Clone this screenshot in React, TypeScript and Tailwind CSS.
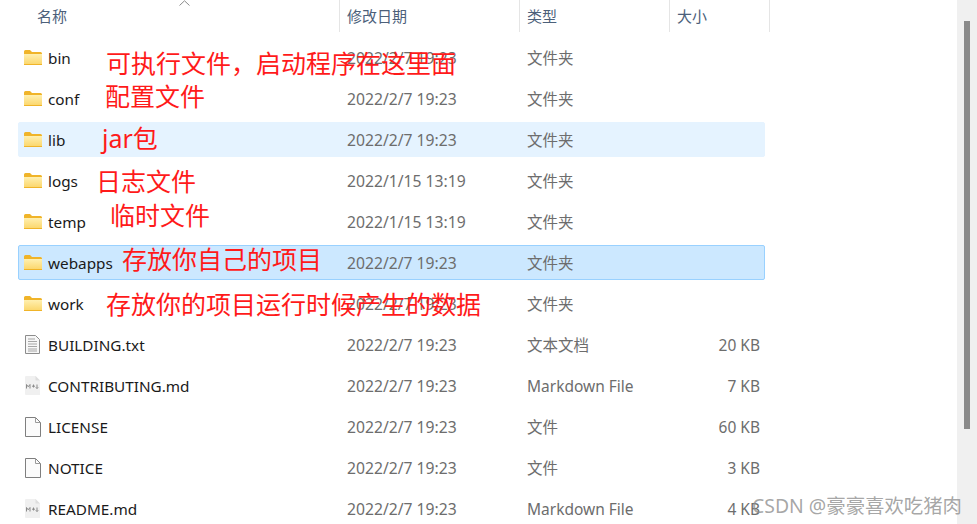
import React from 'react';

const font = { fontFamily: '"Noto Sans", "Noto Sans CJK SC", sans-serif' };

type Kind = 'folder' | 'txt' | 'md' | 'blank';

const rows: { name: string; date: string; type: string; size?: string; kind: Kind; state?: string }[] = [
  { name: 'bin', date: '2022/2/7 19:23', type: '文件夹', kind: 'folder' },
  { name: 'conf', date: '2022/2/7 19:23', type: '文件夹', kind: 'folder' },
  { name: 'lib', date: '2022/2/7 19:23', type: '文件夹', kind: 'folder', state: 'bg-[#e5f3ff] border-[#e5f3ff]' },
  { name: 'logs', date: '2022/1/15 13:19', type: '文件夹', kind: 'folder' },
  { name: 'temp', date: '2022/1/15 13:19', type: '文件夹', kind: 'folder' },
  { name: 'webapps', date: '2022/2/7 19:23', type: '文件夹', kind: 'folder', state: 'bg-[#cce8ff] border-[#99d1ff]' },
  { name: 'work', date: '2022/2/7 19:23', type: '文件夹', kind: 'folder' },
  { name: 'BUILDING.txt', date: '2022/2/7 19:23', type: '文本文档', size: '20 KB', kind: 'txt' },
  { name: 'CONTRIBUTING.md', date: '2022/2/7 19:23', type: 'Markdown File', size: '7 KB', kind: 'md' },
  { name: 'LICENSE', date: '2022/2/7 19:23', type: '文件', size: '60 KB', kind: 'blank' },
  { name: 'NOTICE', date: '2022/2/7 19:23', type: '文件', size: '3 KB', kind: 'blank' },
  { name: 'README.md', date: '2022/2/7 19:23', type: 'Markdown File', size: '4 KB', kind: 'md' },
];

const notes = [
  { text: '可执行文件，启动程序在这里面', place: 'left-[106px] top-[45px]' },
  { text: '配置文件', place: 'left-[105px] top-[78px]' },
  { text: 'jar包', place: 'left-[102px] top-[120px]' },
  { text: '日志文件', place: 'left-[96px] top-[163px]' },
  { text: '临时文件', place: 'left-[110px] top-[197px]' },
  { text: '存放你自己的项目', place: 'left-[122px] top-[241px]' },
  { text: '存放你的项目运行时候产生的数据', place: 'left-[106px] top-[286px]' },
];

const FileIcon = ({ kind }: { kind: Kind }) => {
  if (kind === 'folder') {
    return (
      <svg width="18" height="15" viewBox="0 0 18 15">
        <defs>
          <linearGradient id="fold" x1="0" y1="0" x2="0" y2="1">
            <stop offset="0" stopColor="#fff0b0" />
            <stop offset="1" stopColor="#fbd568" />
          </linearGradient>
        </defs>
        <path d="M0 1.5Q0 0 1.5 0H6L8 2H16.5Q18 2 18 3.5V5H0Z" fill="#f0b429" />
        <path d="M0 4H18V13.5Q18 15 16.5 15H1.5Q0 15 0 13.5Z" fill="url(#fold)" />
        <path d="M0 14H18V15H0Z" fill="#f0b429" />
      </svg>
    );
  }
  if (kind === 'txt') {
    return (
      <svg className="ml-[1px]" width="15" height="19" viewBox="0 0 15 19" fill="none">
        <path d="M.5.5H10.5L14.5 4.5V18.5H.5Z" fill="#f7f7f7" stroke="#8c8c8c" />
        <path d="M3 4H10M3 6.5H12M3 9H12M3 11.5H12M3 14H12M3 16H12" stroke="#a5a5a5" />
      </svg>
    );
  }
  if (kind === 'md') {
    return (
      <svg className="ml-[1px]" width="15" height="19" viewBox="0 0 15 19">
        <path d="M1 0H10.5L15 4.5V19H1Q0 19 0 18V1Q0 0 1 0Z" fill="#f0f0f0" />
        <path d="M10.5 0L15 4.5H10.5Z" fill="#dedede" />
        <path d="M1.5 12.5V8.5L3.2 10.8 5 8.5V12.5M8.5 8.5V11.5M7 10.2H10M12 8.5V12.5M10.8 11.3L12 12.5 13.2 11.3" stroke="#8a8a8a" strokeWidth="1" fill="none" />
      </svg>
    );
  }
  return (
    <svg className="ml-[1px]" width="16" height="20" viewBox="0 0 16 20" fill="none">
      <path d="M.5.5H10.5L15.5 5.5V19.5H.5Z" fill="#fbfbfb" stroke="#7f7f7f" />
      <path d="M10.5.5V5.5H15.5" stroke="#9a9a9a" />
    </svg>
  );
};

const headers = [
  { label: '名称', width: 'w-[340px]', pad: 'pl-[37px]' },
  { label: '修改日期', width: 'w-[180px]', pad: 'pl-[7px]' },
  { label: '类型', width: 'w-[150px]', pad: 'pl-[7px]' },
  { label: '大小', width: 'w-[100px]', pad: 'pl-[7px]' },
];

export default function App() {
  return (
    <div className="relative w-[977px] h-[524px] overflow-hidden bg-white flex" style={font}>
      <main className="w-[957px] flex flex-col">
        {/* header */}
        <div className="flex h-[32px] shrink-0 relative">
          {headers.map((h) => (
            <div key={h.label} className={`${h.width} ${h.pad} border-r border-[#e5e5e5] text-[15px] leading-[32px] text-[#4c607a]`}>
              {h.label}
            </div>
          ))}
          <svg className="absolute left-[179px] top-0" width="11" height="6" viewBox="0 0 11 6" fill="none">
            <path d="M.5 5.5L5.5.8 10.5 5.5" stroke="#8a8a8a" />
          </svg>
        </div>

        {/* list */}
        <div className="flex flex-col gap-[6px] pt-[8px] pl-[18px]">
          {rows.map((r) => (
            <div
              key={r.name}
              className={`flex items-center w-[747px] h-[35px] shrink-0 border rounded-[2px] ${r.state ?? 'border-transparent'}`}
            >
              <div className="w-[24px] ml-[5px] flex justify-start shrink-0">
                <FileIcon kind={r.kind} />
              </div>
              <span className="w-[299px] pt-[2px] text-[15.3px] text-[#1a1a1a]">{r.name}</span>
              <span className="w-[180px] pt-[2px] text-[15.7px] text-[#6d6d6d]">{r.date}</span>
              <span className="w-[130px] pt-[2px] text-[15.5px] text-[#6d6d6d]">{r.type}</span>
              <span className="w-[103px] pt-[2px] text-right text-[15.5px] text-[#6d6d6d]">{r.size}</span>
            </div>
          ))}
        </div>
      </main>

      {/* scrollbar */}
      <div className="w-[20px] bg-[#f0f0f0] pt-[21px] pl-[7px]">
        <div className="w-[6px] h-[408px] bg-[#8a8a8a]" />
      </div>

      {/* hand-written annotations over the list */}
      {notes.map((n) => (
        <span key={n.text} className={`absolute ${n.place} text-[25px] leading-[36px] whitespace-nowrap text-[#ff1a1a]`}>
          {n.text}
        </span>
      ))}

      {/* watermark */}
      <span className="absolute left-[752px] top-[493px] text-[19.4px] leading-[26px] whitespace-nowrap text-[#8f8f8f]/80">
        CSDN @豪豪喜欢吃猪肉
      </span>
    </div>
  );
}
